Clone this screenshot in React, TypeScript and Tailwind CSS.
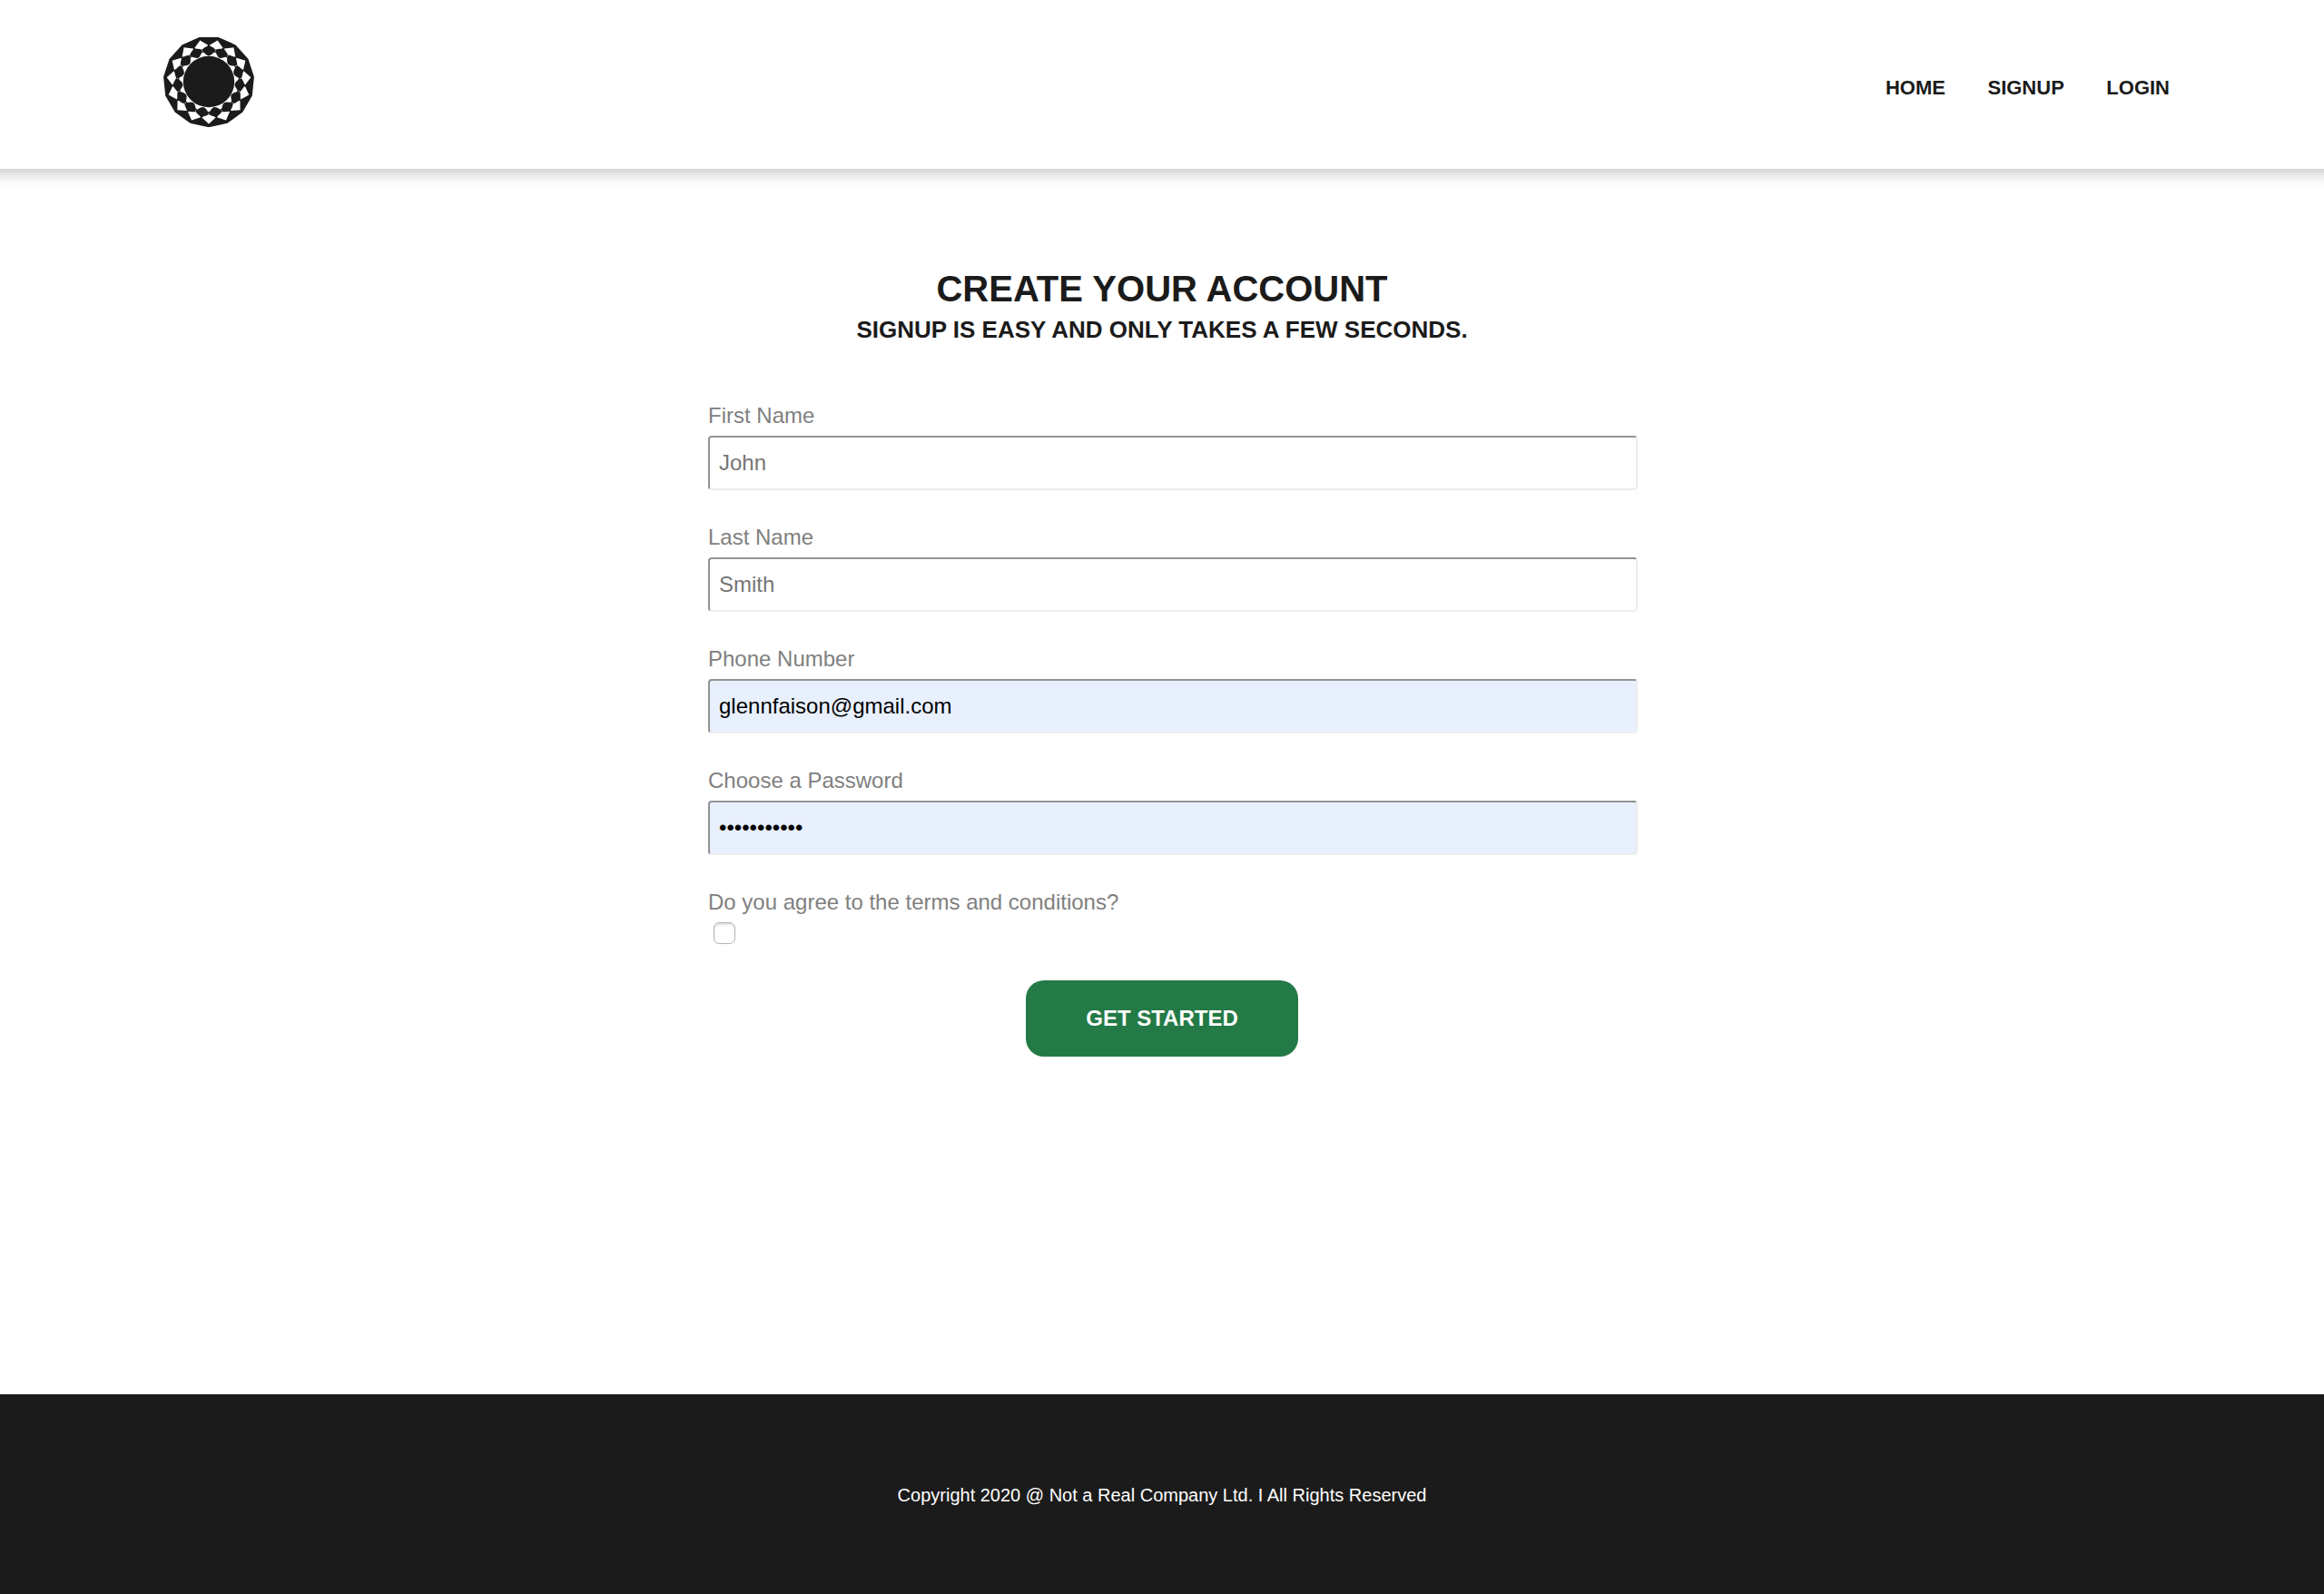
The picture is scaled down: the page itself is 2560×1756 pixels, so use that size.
const CX = 50;
const RING = Array.from({ length: 15 }, (_, i) => i * 24);

function pt(deg: number, r: number) {
  const a = (deg * Math.PI) / 180;
  return `${(CX + r * Math.sin(a)).toFixed(2)},${(CX - r * Math.cos(a)).toFixed(2)}`;
}

function petal(d: number) {
  return `M${pt(d, 39.4)} Q${pt(d + 7, 38.6)} ${pt(d + 12.2, 36)} Q${pt(d + 8, 29.6)} ${pt(d, 28.6)} Q${pt(d - 8, 29.6)} ${pt(d - 12.2, 36)} Q${pt(d - 7, 38.6)} ${pt(d, 39.4)}Z`;
}

function Logo() {
  return (
    <svg viewBox="0 0 100 100" className="size-[100px]" aria-label="Logo">
      <polygon fill="#1b1b1b" points={RING.map((d) => pt(d + 12, 50.2)).join(" ")} />
      <circle cx="50" cy="50" r="33" fill="#fff" />
      {RING.map((d) => (
        <polygon key={d} fill="#fff" points={[pt(d + 12, 46.6), pt(d + 1, 40.2), pt(d + 12, 34), pt(d + 23, 40.2)].join(" ")} />
      ))}
      {RING.map((d) => (
        <path key={d} fill="#1b1b1b" d={petal(d)} />
      ))}
      <circle cx="50" cy="50" r="28.2" fill="#1b1b1b" />
    </svg>
  );
}

type FieldProps = { label: string; type?: string; placeholder?: string; value?: string };

function Field({ label, type = "text", placeholder, value }: FieldProps) {
  return (
    <div className="flex h-[134px] flex-col">
      <label className="h-[36px] text-[24px] leading-[28px] text-[#808080]">{label}</label>
      <input
        type={type}
        placeholder={placeholder}
        defaultValue={value}
        className={
          "h-[60px] w-[1024px] rounded-[4px] border-2 border-t-[#949494] border-r-[#ededed] border-b-[#ededed] border-l-[#949494] px-[10px] text-[24px] text-black placeholder:text-[#757575] " +
          (value ? "bg-[#e8f0fe]" : "bg-white")
        }
      />
    </div>
  );
}

export default function App() {
  return (
    <div className="flex h-[1756px] w-[2560px] flex-col overflow-hidden bg-white font-['Liberation_Sans',Arial,sans-serif] text-[#1b1b1b]">
      <header className="flex h-[186px] shrink-0 items-start justify-between pr-[170px] pl-[180px] shadow-[0_-8px_16px_12px_rgba(0,0,0,0.25)]">
        <div className="pt-[40px]">
          <Logo />
        </div>
        <nav className="flex gap-[46.5px] pt-[84px] text-[22px] leading-[26px] font-bold">
          <a>HOME</a>
          <a>SIGNUP</a>
          <a>LOGIN</a>
        </nav>
      </header>

      <main className="flex flex-1 flex-col items-center pt-[109px]">
        <h1 className="text-[40px] leading-[46px] font-bold">CREATE YOUR ACCOUNT</h1>
        <h2 className="mt-[6px] text-[26px] leading-[32px] font-bold">SIGNUP IS EASY AND ONLY TAKES A FEW SECONDS.</h2>
        <form className="mt-[65px] flex w-[1000px] flex-col">
          <Field label="First Name" placeholder="John" />
          <Field label="Last Name" placeholder="Smith" />
          <Field label="Phone Number" value="glennfaison@gmail.com" />
          <Field label="Choose a Password" type="password" value="abcdefghijk" />
          <label className="h-[36px] text-[24px] leading-[28px] text-[#808080]">Do you agree to the terms and conditions?</label>
          <span className="ml-[6px] size-[24px] rounded-[6px] border border-[#b4b4b4] shadow-[inset_0_2px_2px_rgba(0,0,0,0.12)]" />
          <button type="button" className="mt-[40px] h-[84px] w-[300px] self-center rounded-[20px] bg-[#237a46] text-[24px] font-bold text-white">
            GET STARTED
          </button>
        </form>
      </main>

      <footer className="flex h-[220px] shrink-0 justify-center bg-[#1b1b1b] pt-[99px] text-[20px] leading-[24px] text-white">
        Copyright 2020 @ Not a Real Company Ltd. I All Rights Reserved
      </footer>
    </div>
  );
}
